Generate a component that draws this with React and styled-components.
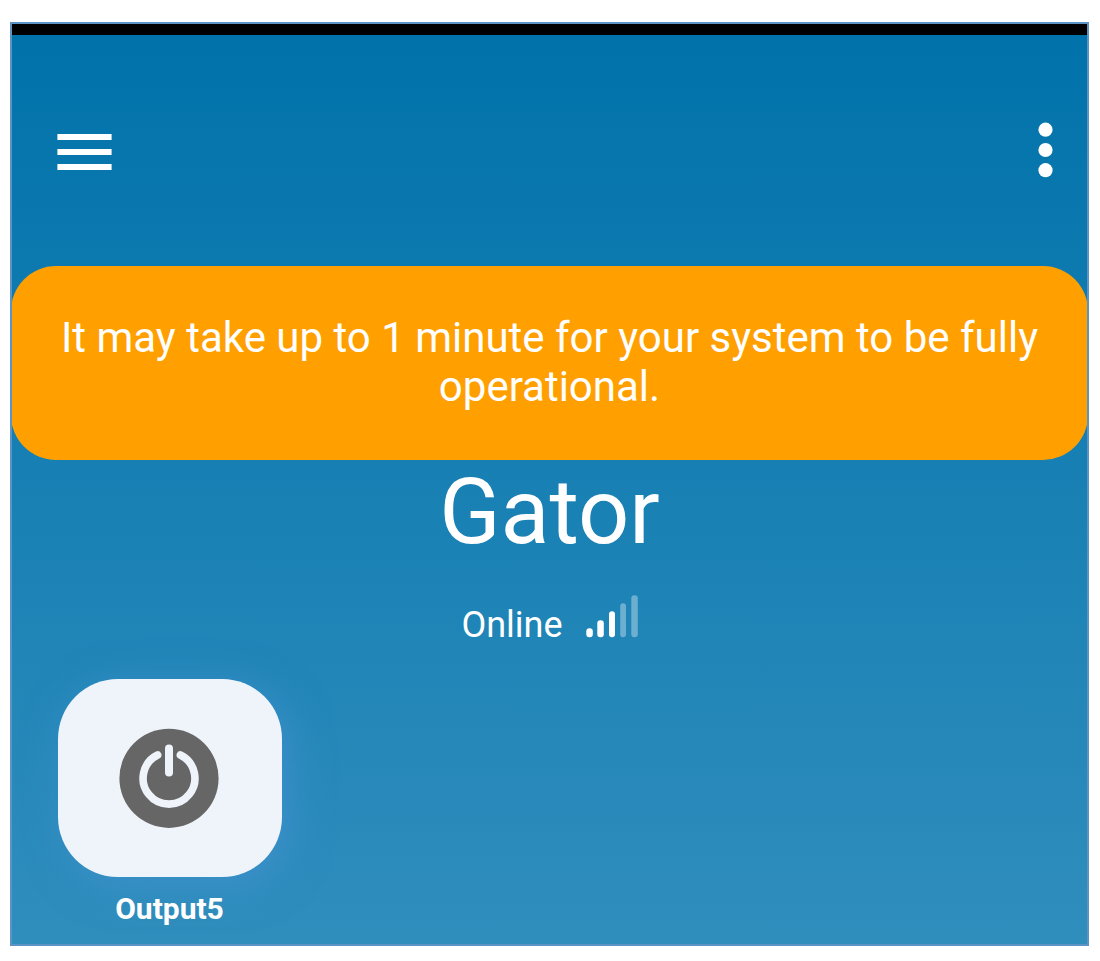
import React from 'react';
import styled, { createGlobalStyle } from 'styled-components';

const Global = createGlobalStyle`
  * { box-sizing: border-box; }
  body { margin: 0; background: #fff; font-family: Roboto, sans-serif; color: #fff; }
`;
const Page = styled.div`
  width: 1100px; height: 961px; padding: 22px 11px 15px 10px; overflow: hidden;
`;
const Screen = styled.main`
  height: 924px; border: 2px solid #5b93c4; display: flex; flex-direction: column;
  overflow: hidden; background: linear-gradient(#0072aa, #308ebd);
`;
const StatusBar = styled.div`height: 11px; flex: none; background: #000;`;
const Header = styled.header`
  height: 231px; flex: none; padding: 87px 34px 0 45px;
  display: flex; justify-content: space-between; align-items: flex-start;
`;
const IconButton = styled.button`
  border: 0; padding: 0; background: none; display: flex; margin-top: ${p => p.$top || 0}px;
`;
const Notice = styled.section`
  height: 194px; flex: none; margin: 0 -1px; border-radius: 45px; background: #ffa000;
  padding: 47px 20px 0; text-align: center; font-size: 42px; line-height: 49px;
  white-space: nowrap;
`;
const Title = styled.h1`
  margin: 0; height: 104px; line-height: 106px; text-align: center;
  font-size: 90px; font-weight: 400; flex: none;
`;
const Status = styled.div`
  display: flex; justify-content: center; height: 115px; padding-top: 29px; flex: none;
  font-size: 36px; line-height: 64px;
`;
const Signal = styled.svg`margin: 2px 0 0 23px;`;
const Output = styled.div`
  width: 224px; margin-left: 45.5px; display: flex; flex-direction: column; align-items: center;
`;
const PowerTile = styled.button`
  border: 0; padding: 0; width: 224px; height: 198px; border-radius: 60px; background: #eff4fb;
  display: flex; align-items: center; justify-content: center;
  box-shadow: 8px 8px 40px rgba(68,145,208,.72);
`;
const PowerIcon = styled.svg`margin: 0 1px 0 0;`;
const Label = styled.div`font-size: 30px; line-height: 34px; font-weight: 700; margin-top: 15px;`;

const bars = [
  { x: 0.3, y: 33, width: 6.5 },
  { x: 11.3, y: 25, width: 6.5 },
  { x: 23, y: 16, width: 6 },
  { x: 34.2, y: 8, width: 5.8, weak: true },
  { x: 45.3, y: 0, width: 6.5, weak: true },
];

export default function App() {
  return <><Global /><Page><Screen>
    <StatusBar />
    <Header>
      <IconButton $top={12} aria-label="Menu"><svg width="55" height="37" fill="#fff"><path d="M.4 0h54.2v6H.4zm0 15h54.2v6H.4zm0 15h54.2v6H.4z" /></svg></IconButton>
      <IconButton aria-label="More"><svg width="15" height="56" fill="#fff"><circle cx="7.5" cy="7.7" r="7.1"/><circle cx="7.5" cy="28" r="7.1"/><circle cx="7.5" cy="48.2" r="7.1"/></svg></IconButton>
    </Header>
    <Notice>It may take up to 1 minute for your system to be fully<br />operational.</Notice>
    <Title>Gator</Title>
    <Status>
      Online
      <Signal width="52" height="44" fill="#fff">
        {bars.map(b => <rect key={b.x} x={b.x} y={b.y + .3} width={b.width} height={42 - b.y} rx="3" opacity={b.weak ? .35 : 1} />)}
      </Signal>
    </Status>
    <Output>
      <PowerTile aria-label="Toggle Output5">
        <PowerIcon width="100" height="100" viewBox="0 0 100 100" fill="none">
          <circle cx="50" cy="50.3" r="49.6" fill="#666"/>
          <path d="M38.6 27a25.9 25.9 0 1 0 22.8 0" stroke="#eff4fb" strokeWidth="7.6" strokeLinecap="round"/>
          <path d="M50 20.5v24" stroke="#eff4fb" strokeWidth="8" strokeLinecap="round"/>
        </PowerIcon>
      </PowerTile>
      <Label>Output5</Label>
    </Output>
  </Screen></Page></>;
}
